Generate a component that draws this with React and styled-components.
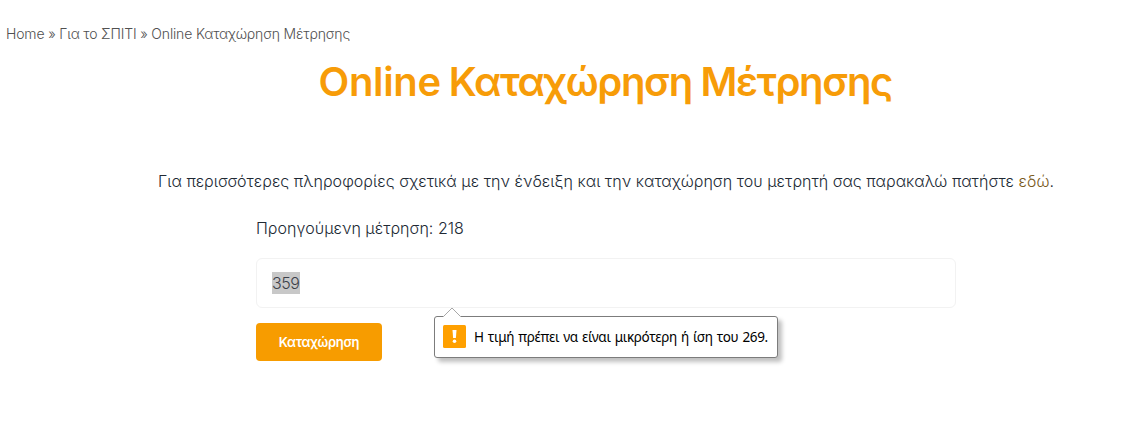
import React from 'react';
import styled, { createGlobalStyle } from 'styled-components';

const Global = createGlobalStyle`
  * { box-sizing: border-box; }
  body { margin: 0; background: #fff; font-family: Inter, "Open Sans", sans-serif; color: #212934; }
`;

const Page = styled.main`
  width: 1146px;
  height: 422px;
  overflow: hidden;
  display: flex;
  flex-direction: column;
  white-space: nowrap;
`;

const Fit = styled.span`
  letter-spacing: ${(p) => p.$track || 0}px;
  word-spacing: ${(p) => p.$word || 0}px;
`;

const Breadcrumbs = styled.nav`
  padding: 24px 0 0 6px;
  font-size: 14px;
  font-weight: 300;
  line-height: 20px;
  color: #505050;
`;

const Title = styled.h1`
  margin: 12px 0 0 318.5px;
  font-size: 40px;
  line-height: 52px;
  font-weight: 600;
  color: #f79c08;
`;

const Intro = styled.p`
  margin: 61px 0 0 158px;
  font-size: 16px;
  font-weight: 300;
  line-height: 24px;
`;

const Link = styled.a`
  color: #7a5a1c;
`;

const Form = styled.form`
  margin: 23px 0 0 256px;
  width: 700px;
  display: flex;
  flex-direction: column;
  align-items: flex-start;
`;

const Label = styled.label`
  font-size: 16px;
  font-weight: 300;
  line-height: 24px;
`;

const FieldWrap = styled.div`
  position: relative;
  width: 100%;
  margin-top: 18px;
`;

const Field = styled.div`
  height: 50px;
  border: 1px solid #f2f2f2;
  border-radius: 6px;
  padding: 0 15px;
  display: flex;
  align-items: center;
  font-size: 16px;
  font-weight: 300;
`;

const Selected = styled.span`
  background: #c8c8c8;
  color: #3c4048;
  width: 28px;
  height: 22px;
  line-height: 22px;
  letter-spacing: -0.5px;
`;

const Submit = styled.button`
  margin: 15px 0 0;
  padding: 0;
  width: 126px;
  height: 38px;
  border: 0;
  border-radius: 4px;
  background: #f79c00;
  color: #fff;
  font: 600 13px Inter, sans-serif;
`;

const Tooltip = styled.div`
  position: absolute;
  left: 178px;
  top: 58px;
  width: 344px;
  height: 42px;
  border: 1px solid #7c7c7c;
  border-radius: 3px;
  background: #fff;
  box-shadow: 4px 4px 4px rgba(0, 0, 0, 0.25);
  display: flex;
  align-items: center;
  gap: 8px;
  padding: 0 0 1px 8px;
  font-family: "Noto Sans", sans-serif;
  font-size: 13.5px;
  color: #000;
`;

const Arrow = styled.svg`
  position: absolute;
  left: 8px;
  top: -10px;
`;

const Warning = styled.svg`
  flex: none;
`;

export default function App() {
  return (
    <Page>
      <Global />
      <Breadcrumbs><Fit $track={-0.16}>Home » Για το ΣΠΙΤΙ » Online Καταχώρηση Μέτρησης</Fit></Breadcrumbs>
      <Title>
        <Fit $track={-0.35} $word={-1.7}>Online </Fit>
        <Fit $track={-1.36} $word={-0.2}>Καταχώρηση Μέτρησης</Fit>
      </Title>
      <Intro>
        <Fit $track={0.035}>Για περισσότερες πληροφορίες σχετικά με την ένδειξη και την καταχώρηση του μετρητή σας παρακαλώ πατήστε <Link>εδώ</Link>.</Fit>
      </Intro>
      <Form>
        <Label><Fit>Προηγούμενη μέτρηση: 218</Fit></Label>
        <FieldWrap>
          <Field><Selected>359</Selected></Field>
          <Tooltip role="alert">
            <Arrow width="18" height="11" viewBox="0 0 18 11">
              <path d="M.5 9.5 9 1 17.5 9.5V11H.5z" fill="#fff" />
              <path d="M.5 9.5 9 1 17.5 9.5" fill="none" stroke="#a8a8a8" />
            </Arrow>
            <Warning width="23" height="23" viewBox="0 0 23 23">
              <rect width="23" height="23" rx="1.5" fill="#ffa000" />
              <path d="M9.5 5h4l-.6 8h-2.8z" fill="#fff" />
              <circle cx="11.5" cy="16.3" r="1.8" fill="#fff" />
            </Warning>
            <Fit $track={-0.35} $word={1}>Η τιμή πρέπει να είναι μικρότερη ή ίση του 269.</Fit>
          </Tooltip>
        </FieldWrap>
        <Submit type="button"><Fit $track={-0.3}>Καταχώρηση</Fit></Submit>
      </Form>
    </Page>
  );
}
